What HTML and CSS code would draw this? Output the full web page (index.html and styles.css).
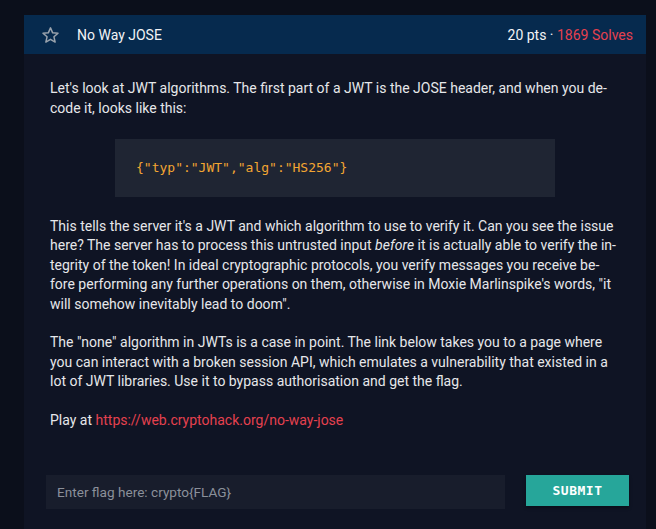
FILE: index.html
```html
<!DOCTYPE html>
<html lang="en">
<head>
<meta charset="utf-8">
<link rel="stylesheet" href="styles.css">
</head>
<body>
<div class="card">
  <div class="card-header">
    <div class="title-wrap">
      <svg class="star" width="19" height="18" viewBox="0 0 24 24" fill="none" stroke="#9aa3ad" stroke-width="2" stroke-linejoin="round"><path d="M12 2.5l2.9 6.6 7.1.6-5.4 4.7 1.6 7-6.2-3.7-6.2 3.7 1.6-7L2 9.7l7.1-.6z"/></svg>
      <span class="title">No Way JOSE</span>
    </div>
    <div class="meta">20 pts · <span class="solves">1869 Solves</span></div>
  </div>
  <div class="card-body">
    <p>Let's look at JWT algorithms. The first part of a JWT is the JOSE header, and when you de&shy;code it, looks like this:</p>
    <pre class="code">{"typ":"JWT","alg":"HS256"}</pre>
    <p>This tells the server it's a JWT and which algorithm to use to verify it. Can you see the issue here? The server has to process this untrusted input <em>before</em> it is actually able to verify the in&shy;tegrity of the token! In ideal cryptographic protocols, you verify messages you receive be&shy;fore performing any further operations on them, otherwise in Moxie Marlinspike's words, "it will somehow inevitably lead to doom".</p>
    <p>The "none" algorithm in JWTs is a case in point. The link below takes you to a page where you can interact with a broken session API, which emulates a vulnerability that existed in a lot of JWT libraries. Use it to bypass authorisation and get the flag.</p>
    <p>Play at <a href="#">https://web.cryptohack.org/no-way-jose</a></p>
  </div>
  <form class="flag-form">
    <input class="flag-input" type="text" placeholder="Enter flag here: crypto{FLAG}">
    <button class="submit" type="button">SUBMIT</button>
  </form>
</div>
</body>
</html>
```
FILE: styles.css
```css
html, body {
  margin: 0;
  padding: 0;
  background: #0b0f1b;
  height: 100%;
}
body {
  padding: 15px 10px 0 24px;
  box-sizing: border-box;
  font-family: Roboto, "Noto Sans", sans-serif;
  color: #e6e7ea;
  overflow: hidden;
}
.card {
  background: #0f1424;
  min-height: 520px;
}
.card-header {
  background: #062a4e;
  height: 39px;
  display: flex;
  align-items: center;
  justify-content: space-between;
  padding: 0 13px 0 17px;
  font-size: 14px;
}
.title-wrap {
  display: flex;
  align-items: center;
}
.star {
  display: block;
  margin-right: 17px;
}
.title {
  color: #f2f3f5;
}
.meta {
  color: #f2f3f5;
}
.solves {
  color: #e5414f;
}
.card-body {
  padding: 25px 26px 0 26px;
  font-size: 14px;
  line-height: 19.5px;
}
.card-body p {
  margin: 0 0 19px 0;
}
.card-body p:last-child {
  margin-bottom: 0;
}
.card-body em {
  font-style: italic;
}
.card-body a {
  color: #e5414f;
  text-decoration: none;
}
.code {
  background: #1f2533;
  margin: 21px 65px 20px 65px;
  padding: 19px 21px;
  font-family: "DejaVu Sans Mono", monospace;
  font-size: 13px;
  line-height: 19.5px;
  color: #f3a632;
}
.flag-form {
  display: flex;
  gap: 21px;
  margin: 45px 17px 0 22px;
  align-items: flex-start;
}
.flag-input {
  flex: 1;
  height: 34px;
  box-sizing: border-box;
  background: #181d2c;
  border: none;
  outline: none;
  padding: 0 11px;
  font-family: Roboto, sans-serif;
  font-size: 13.6px;
  color: #e6e7ea;
}
.flag-input::placeholder {
  color: #8b909a;
}
.submit {
  width: 103px;
  height: 31px;
  background: #26a69a;
  border: none;
  color: #ffffff;
  font-family: "DejaVu Sans Mono", monospace;
  font-weight: bold;
  font-size: 13px;
  letter-spacing: 0.5px;
  box-shadow: 0 2px 3px rgba(0,0,0,0.35);
  padding: 0;
}
```
